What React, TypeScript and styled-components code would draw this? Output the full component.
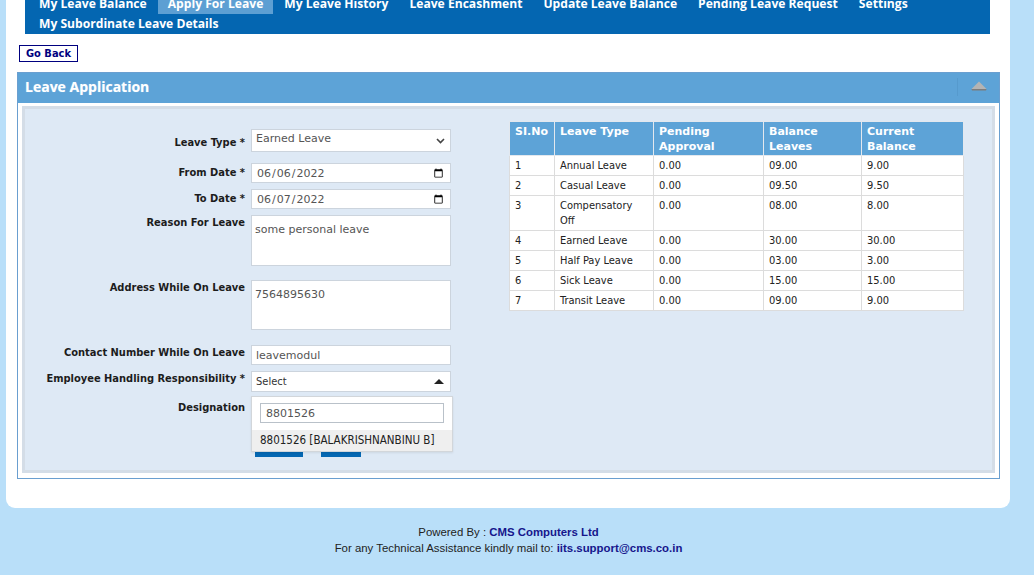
import React, { useLayoutEffect, useRef } from 'react';
import styled, { createGlobalStyle } from 'styled-components';

const GlobalStyle = createGlobalStyle`
  html, body {
    margin: 0;
    padding: 0;
    height: 100%;
    overflow: hidden;
  }
  #root {
    height: 100%;
  }
`;

const Page = styled.div`
  height: 100vh;
  overflow-y: scroll;
  box-sizing: border-box;
  padding-right: 17px;
  background: #b9dff9;
  font-family: "DejaVu Sans Condensed", "DejaVu Sans", sans-serif;
  &::-webkit-scrollbar {
    width: 17px;
  }
  &::-webkit-scrollbar-track {
    background: #f1f1f1;
  }
  &::-webkit-scrollbar-thumb {
    background: #c1c1c1;
    border: 2px solid #f1f1f1;
  }
`;

const Banner = styled.header`
  height: 140px;
  display: flex;
  align-items: center;
  padding-left: 24px;
  box-sizing: border-box;
  font: 600 22px "Open Sans", sans-serif;
  color: #0466b1;
`;

const Shell = styled.div`
  margin: 0 7px 0 6px;
  padding: 30px 10px 29px 11px;
  background: #fff;
  border-radius: 0 0 9px 9px;
`;

const NavBar = styled.nav`
  background: #0466b1;
  margin: 0 10px 0 8px;
`;

const NavList = styled.ul`
  list-style: none;
  margin: 0;
  padding: 0 0 0 4px;
  display: flex;
  flex-wrap: wrap;
`;

const NavItem = styled.li<{ $active?: boolean }>`
  padding: 0 10px;
  margin-right: 1px;
  font: 700 12.12px/20px "Open Sans", sans-serif;
  color: #fff;
  white-space: nowrap;
  background: ${(p) => (p.$active ? '#5d9fd3' : 'transparent')};
`;

const GoBack = styled.button`
  display: block;
  margin: 11px 0 10px 2px;
  height: 17px;
  padding: 0 6px;
  border: 1px solid #00007f;
  background: #fff;
  color: #00007f;
  font: bold 11px/15px "DejaVu Sans Condensed", "DejaVu Sans", sans-serif;
`;

const Panel = styled.section`
  border: 1px solid #6a9fd0;
`;

const PanelHeader = styled.div`
  box-sizing: border-box;
  height: 30px;
  background: #5da3d7;
  display: flex;
  align-items: center;
  justify-content: space-between;
  padding: 0 0 3px 7px;
`;

const PanelTitle = styled.h2`
  margin: 0;
  font: 700 14px "Open Sans", sans-serif;
  color: #fff;
  text-shadow: 0 0 1px rgba(255, 255, 255, 0.4);
`;

const PanelTool = styled.span`
  box-sizing: border-box;
  width: 42px;
  height: 18px;
  padding-top: 3px;
  display: flex;
  align-items: flex-start;
  justify-content: center;
  border-left: 1px solid rgba(0, 40, 90, 0.07);
`;

const PanelBody = styled.div`
  padding: 3px 4px 5px;
`;

const Inner = styled.div`
  display: flex;
  background: #dee9f5;
  border: 3px solid #d4dde7;
  padding: 12px 0 13px;
`;

const FormCol = styled.div`
  flex: none;
  width: 484px;
  padding-top: 8px;
`;

const Field = styled.div<{ $mt?: number }>`
  display: grid;
  grid-template-columns: 220px 200px;
  column-gap: 6px;
  margin-top: ${(p) => p.$mt ?? 0}px;
`;

const Label = styled.label<{ $pt: number }>`
  text-align: right;
  font: bold 11px/13px "DejaVu Sans Condensed", "DejaVu Sans", sans-serif;
  color: #1c1c1c;
  padding-top: ${(p) => p.$pt}px;
`;

const Control = styled.div`
  position: relative;
  width: 200px;
`;

const baseInput = `
  box-sizing: border-box;
  width: 200px;
  border: 1px solid #ccd4dd;
  background: #fff;
  color: #555;
  font: 11px "DejaVu Sans", sans-serif;
  outline: none;
  margin: 0;
  display: block;
`;

const Select = styled.select`
  ${baseInput}
  height: 23px;
  appearance: none;
  padding: 0 20px 4px 4px;
`;

const Chevron = styled.svg`
  position: absolute;
  right: 6px;
  top: 9px;
  pointer-events: none;
`;

const TextInput = styled.input<{ $h?: number }>`
  ${baseInput}
  height: ${(p) => p.$h ?? 20}px;
  padding: 0 4px;
`;

const TextArea = styled.textarea<{ $h: number }>`
  ${baseInput}
  height: ${(p) => p.$h}px;
  padding: 6px 3px 0;
  line-height: 15px;
  resize: none;
`;

const Selection = styled.div`
  box-sizing: border-box;
  height: 21px;
  border: 1px solid #ccd4dd;
  background: #fff;
  display: flex;
  align-items: center;
  justify-content: space-between;
  padding: 0 6px 0 4px;
  font: 11px "DejaVu Sans Condensed", "DejaVu Sans", sans-serif;
  color: #333;
`;

const Dropdown = styled.div`
  position: absolute;
  left: 0;
  top: 25px;
  width: 202px;
  box-sizing: border-box;
  background: #fff;
  border: 1px solid #d2d6da;
  box-shadow: 0 1px 2px rgba(0, 0, 0, 0.08);
  z-index: 5;
`;

const Search = styled.input`
  ${baseInput}
  width: 184px;
  height: 20px;
  margin: 6px 8px 7px;
  padding: 0 5px;
  border-color: #b9c1c9;
`;

const Option = styled.div`
  height: 21px;
  background: #efefef;
  padding-left: 8px;
  font: 11.5px/21px "DejaVu Sans Condensed", "DejaVu Sans", sans-serif;
  color: #222;
`;

const ButtonRow = styled.div`
  grid-column: 2;
  display: flex;
  gap: 18px;
  padding-left: 4px;
`;

const Button = styled.button<{ $w: number }>`
  width: ${(p) => p.$w}px;
  height: 22px;
  border: none;
  background: #0467b2;
  color: #fff;
  font: 11px "DejaVu Sans", sans-serif;
  padding: 0;
`;

const TableCol = styled.div`
  flex: 1;
`;

const Table = styled.table`
  border-collapse: collapse;
  table-layout: fixed;
  background: #fff;
  font: 11px/15px "DejaVu Sans Condensed", "DejaVu Sans", sans-serif;
  color: #222;
  border: 1px solid #dcdcdc;
`;

const Th = styled.th<{ $w: number }>`
  width: ${(p) => p.$w}px;
  background: #5da3d7;
  color: #fff;
  font: bold 11px/15px "DejaVu Sans", sans-serif;
  text-align: left;
  vertical-align: top;
  padding: 2px 5px 1px;
  border: 1px solid #e3e8ee;
`;

const Td = styled.td`
  padding: 2px 5px;
  vertical-align: top;
  border: 1px solid #dcdcdc;
`;

const Footer = styled.footer`
  padding: 16px 0 24px;
  text-align: center;
  font: 11.4px/16px "Liberation Sans", Arial, sans-serif;
  color: #222;
`;

const FooterLink = styled.span`
  color: #16168c;
  font-weight: bold;
`;

const navItems = [
  'My Leave Balance',
  'Apply For Leave',
  'My Leave History',
  'Leave Encashment',
  'Update Leave Balance',
  'Pending Leave Request',
  'Settings',
  'My Subordinate Leave Details',
];

const columns: [string, number][] = [
  ['SI.No', 34],
  ['Leave Type', 88],
  ['Pending Approval', 99],
  ['Balance Leaves', 87],
  ['Current Balance', 91],
];

const balances = [
  ['1', 'Annual Leave', '0.00', '09.00', '9.00'],
  ['2', 'Casual Leave', '0.00', '09.50', '9.50'],
  ['3', 'Compensatory Off', '0.00', '08.00', '8.00'],
  ['4', 'Earned Leave', '0.00', '30.00', '30.00'],
  ['5', 'Half Pay Leave', '0.00', '03.00', '3.00'],
  ['6', 'Sick Leave', '0.00', '15.00', '15.00'],
  ['7', 'Transit Leave', '0.00', '09.00', '9.00'],
];

const App = () => {
  const pageRef = useRef<HTMLDivElement>(null);
  const navRef = useRef<HTMLElement>(null);

  useLayoutEffect(() => {
    const page = pageRef.current;
    const nav = navRef.current;
    if (!page || !nav) return;
    const offset = nav.getBoundingClientRect().top - page.getBoundingClientRect().top;
    page.scrollTop = offset + 6;
  }, []);

  return (
    <Page ref={pageRef}>
      <GlobalStyle />
      <Banner>Leave Management</Banner>
      <Shell>
        <NavBar ref={navRef}>
          <NavList>
            {navItems.map((item) => (
              <NavItem key={item} $active={item === 'Apply For Leave'}>
                {item}
              </NavItem>
            ))}
          </NavList>
        </NavBar>
        <GoBack>Go Back</GoBack>
        <Panel>
          <PanelHeader>
            <PanelTitle>Leave Application</PanelTitle>
            <PanelTool>
              <svg width="16" height="10" viewBox="0 0 16 10">
                <polygon points="8,0.5 15.5,8 0.5,8" fill="#b4b4b4" />
                <polygon points="0.5,8 15.5,8 15,9.5 1,9.5" fill="#7d7d7d" />
              </svg>
            </PanelTool>
          </PanelHeader>
          <PanelBody>
            <Inner>
              <FormCol>
                <Field>
                  <Label $pt={7}>Leave Type *</Label>
                  <Control>
                    <Select defaultValue="EL">
                      <option value="EL">Earned Leave</option>
                      <option value="AL">Annual Leave</option>
                      <option value="CL">Casual Leave</option>
                    </Select>
                    <Chevron width="9" height="6" viewBox="0 0 9 6">
                      <polyline points="1,1 4.5,4.5 8,1" fill="none" stroke="#444" strokeWidth="1.6" />
                    </Chevron>
                  </Control>
                </Field>
                <Field $mt={11}>
                  <Label $pt={3}>From Date *</Label>
                  <TextInput type="date" defaultValue="2022-06-06" />
                </Field>
                <Field $mt={6}>
                  <Label $pt={3}>To Date *</Label>
                  <TextInput type="date" defaultValue="2022-06-07" />
                </Field>
                <Field $mt={6}>
                  <Label $pt={1}>Reason For Leave</Label>
                  <TextArea $h={51} defaultValue="some personal leave" />
                </Field>
                <Field $mt={14}>
                  <Label $pt={1}>Address While On Leave</Label>
                  <TextArea $h={50} defaultValue="7564895630" />
                </Field>
                <Field $mt={15}>
                  <Label $pt={1}>Contact Number While On Leave</Label>
                  <TextInput defaultValue="leavemodul" />
                </Field>
                <Field $mt={6}>
                  <Label $pt={1}>Employee Handling Responsibility *</Label>
                  <Control>
                    <Selection>
                      <span>Select</span>
                      <svg width="10" height="5" viewBox="0 0 10 5">
                        <polygon points="5,0 10,5 0,5" fill="#222" />
                      </svg>
                    </Selection>
                    <Dropdown>
                      <Search defaultValue="8801526" />
                      <Option>8801526 [BALAKRISHNANBINU B]</Option>
                    </Dropdown>
                  </Control>
                </Field>
                <Field $mt={7}>
                  <Label $pt={2}>Designation</Label>
                  <TextInput />
                </Field>
                <Field $mt={16}>
                  <ButtonRow>
                    <Button $w={48}>Submit</Button>
                    <Button $w={40}>Reset</Button>
                  </ButtonRow>
                </Field>
              </FormCol>
              <TableCol>
                <Table>
                  <thead>
                    <tr>
                      {columns.map(([title, w]) => (
                        <Th key={title} $w={w}>
                          {title}
                        </Th>
                      ))}
                    </tr>
                  </thead>
                  <tbody>
                    {balances.map((row) => (
                      <tr key={row[0]}>
                        {row.map((cell, i) => (
                          <Td key={i}>{cell}</Td>
                        ))}
                      </tr>
                    ))}
                  </tbody>
                </Table>
              </TableCol>
            </Inner>
          </PanelBody>
        </Panel>
      </Shell>
      <Footer>
        <div>
          Powered By : <FooterLink>CMS Computers Ltd</FooterLink>
        </div>
        <div>
          For any Technical Assistance kindly mail to: <FooterLink>iits.support@cms.co.in</FooterLink>
        </div>
      </Footer>
    </Page>
  );
};

export default App;
